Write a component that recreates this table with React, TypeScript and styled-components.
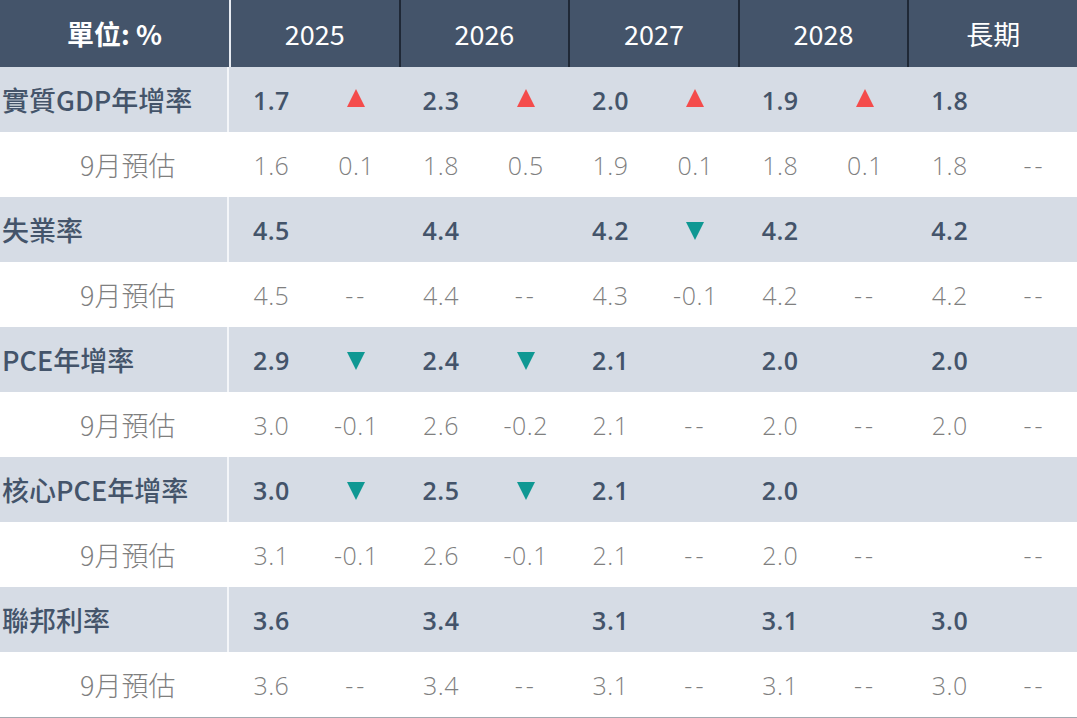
import styled, { createGlobalStyle } from 'styled-components';

const GlobalStyle = createGlobalStyle`
  html, body {
    margin: 0;
    padding: 0;
    background: #fff;
  }
  body {
    font-family: 'Open Sans', 'Noto Sans CJK TC', sans-serif;
  }
`;

type Trend = 'up' | 'down';
type Cell = { value: string; delta?: string; trend?: Trend };

type Row = {
  label: string;
  sub?: boolean;
  cells: Cell[];
};

const rows: Row[] = [
  {
    label: '實質GDP年增率',
    cells: [
      { value: '1.7', trend: 'up' },
      { value: '2.3', trend: 'up' },
      { value: '2.0', trend: 'up' },
      { value: '1.9', trend: 'up' },
      { value: '1.8' },
    ],
  },
  {
    label: '9月預估',
    sub: true,
    cells: [
      { value: '1.6', delta: '0.1' },
      { value: '1.8', delta: '0.5' },
      { value: '1.9', delta: '0.1' },
      { value: '1.8', delta: '0.1' },
      { value: '1.8', delta: '--' },
    ],
  },
  {
    label: '失業率',
    cells: [
      { value: '4.5' },
      { value: '4.4' },
      { value: '4.2', trend: 'down' },
      { value: '4.2' },
      { value: '4.2' },
    ],
  },
  {
    label: '9月預估',
    sub: true,
    cells: [
      { value: '4.5', delta: '--' },
      { value: '4.4', delta: '--' },
      { value: '4.3', delta: '-0.1' },
      { value: '4.2', delta: '--' },
      { value: '4.2', delta: '--' },
    ],
  },
  {
    label: 'PCE年增率',
    cells: [
      { value: '2.9', trend: 'down' },
      { value: '2.4', trend: 'down' },
      { value: '2.1' },
      { value: '2.0' },
      { value: '2.0' },
    ],
  },
  {
    label: '9月預估',
    sub: true,
    cells: [
      { value: '3.0', delta: '-0.1' },
      { value: '2.6', delta: '-0.2' },
      { value: '2.1', delta: '--' },
      { value: '2.0', delta: '--' },
      { value: '2.0', delta: '--' },
    ],
  },
  {
    label: '核心PCE年增率',
    cells: [
      { value: '3.0', trend: 'down' },
      { value: '2.5', trend: 'down' },
      { value: '2.1' },
      { value: '2.0' },
      { value: '' },
    ],
  },
  {
    label: '9月預估',
    sub: true,
    cells: [
      { value: '3.1', delta: '-0.1' },
      { value: '2.6', delta: '-0.1' },
      { value: '2.1', delta: '--' },
      { value: '2.0', delta: '--' },
      { value: '', delta: '--' },
    ],
  },
  {
    label: '聯邦利率',
    cells: [
      { value: '3.6' },
      { value: '3.4' },
      { value: '3.1' },
      { value: '3.1' },
      { value: '3.0' },
    ],
  },
  {
    label: '9月預估',
    sub: true,
    cells: [
      { value: '3.6', delta: '--' },
      { value: '3.4', delta: '--' },
      { value: '3.1', delta: '--' },
      { value: '3.1', delta: '--' },
      { value: '3.0', delta: '--' },
    ],
  },
];

const headers = ['2025', '2026', '2027', '2028', '長期'];

const Table = styled.div`
  width: 1077px;
  border-bottom: 2px solid #a3a9b0;
`;

const HeaderRow = styled.div`
  display: grid;
  grid-template-columns: 229px repeat(5, 1fr);
  height: 67px;
  background: #44546a;
  color: #fff;
`;

const HeaderCell = styled.div<{ $first?: boolean }>`
  display: flex;
  align-items: center;
  justify-content: center;
  font-family: 'Noto Sans CJK TC', sans-serif;
  font-size: 27px;
  font-weight: ${(p) => (p.$first ? 700 : 400)};
  border-left: ${(p) => (p.$first ? 'none' : '2px solid #1f2836')};
  &:nth-child(2) {
    border-left: 2px solid #e8ecf2;
  }
`;

const BodyRow = styled.div<{ $sub?: boolean }>`
  display: grid;
  grid-template-columns: 229px repeat(5, 1fr);
  height: 65px;
  background: ${(p) => (p.$sub ? '#ffffff' : '#d6dce5')};
  color: ${(p) => (p.$sub ? '#7f7f7f' : '#44546a')};
`;

const Label = styled.div<{ $sub?: boolean }>`
  display: flex;
  align-items: center;
  padding-left: ${(p) => (p.$sub ? '80px' : '2px')};
  font-family: 'Noto Sans CJK TC', sans-serif;
  font-size: 27px;
  font-weight: ${(p) => (p.$sub ? 300 : 500)};
  white-space: nowrap;
  border-right: 2px solid ${(p) => (p.$sub ? '#ffffff' : '#f4f6f9')};
`;

const YearCell = styled.div`
  display: grid;
  grid-template-columns: 1fr 1fr;
`;

const Value = styled.div<{ $sub?: boolean; $dash?: boolean }>`
  display: flex;
  align-items: center;
  justify-content: center;
  font-size: 25px;
  letter-spacing: ${(p) => (p.$dash ? '3px' : '0.5px')};
  font-weight: ${(p) => (p.$sub ? 300 : 550)};
`;

const Triangle = styled.span<{ $trend: Trend }>`
  width: 0;
  height: 0;
  border-left: 9px solid transparent;
  border-right: 9px solid transparent;
  ${(p) =>
    p.$trend === 'up'
      ? 'border-bottom: 18px solid #f44c4c; margin-top: -4px;'
      : 'border-top: 18px solid #0f9893; margin-top: 2px;'}
`;

export default function App() {
  return (
    <>
      <GlobalStyle />
      <Table>
        <HeaderRow>
          <HeaderCell $first>單位: %</HeaderCell>
          {headers.map((h) => (
            <HeaderCell key={h}>{h}</HeaderCell>
          ))}
        </HeaderRow>
        {rows.map((row, i) => (
          <BodyRow key={i} $sub={row.sub}>
            <Label $sub={row.sub}>{row.label}</Label>
            {row.cells.map((c, j) => (
              <YearCell key={j}>
                <Value $sub={row.sub}>{c.value}</Value>
                <Value $sub={row.sub} $dash={c.delta === '--'}>
                  {c.trend ? <Triangle $trend={c.trend} /> : c.delta}
                </Value>
              </YearCell>
            ))}
          </BodyRow>
        ))}
      </Table>
    </>
  );
}
